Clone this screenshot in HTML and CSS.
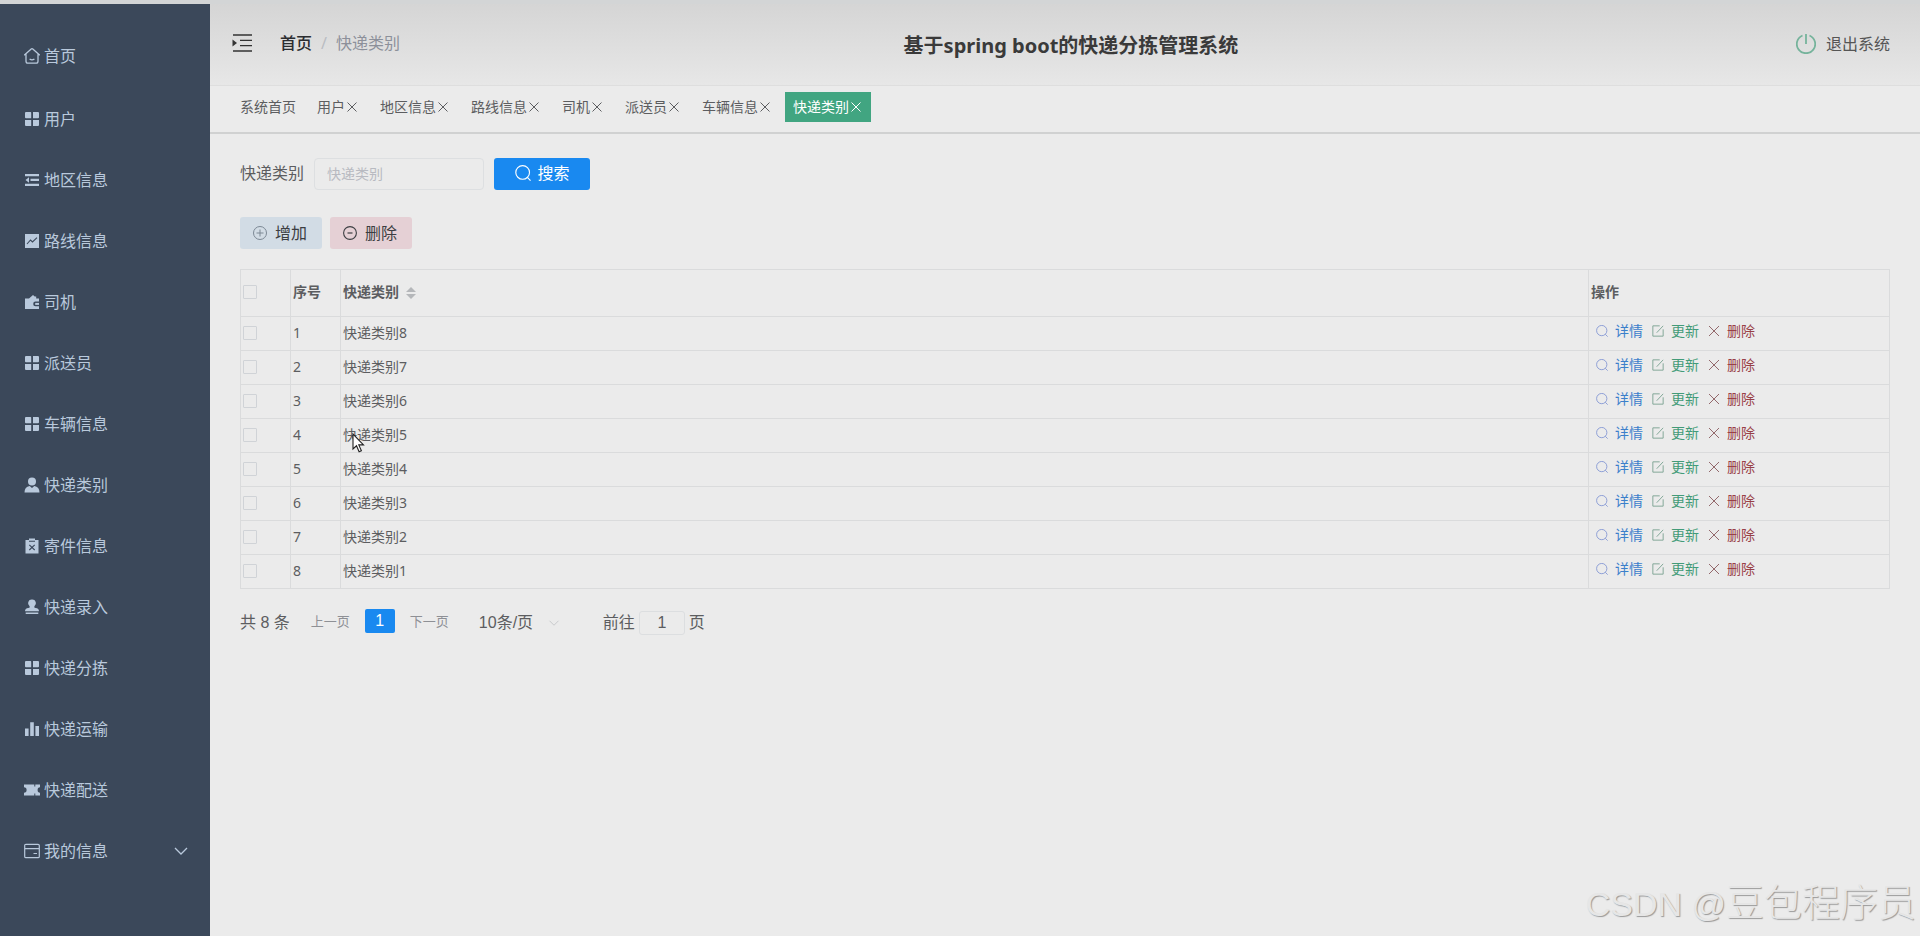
FILE: index.html
```
<!DOCTYPE html>
<html lang="zh-CN">
<head>
    <meta charset="UTF-8">
    <meta name="viewport" content="width=device-width, initial-scale=1.0">
    <title>基于spring boot的快递分拣管理系统</title>
    <link rel="stylesheet" href="styles.css">
</head>
<body>
    <!-- shared icons -->
    <svg class="sprite" aria-hidden="true">
        <symbol id="i-home" viewBox="0 0 16 16"><path d="M2 6.2v7.1q0 1.9 1.9 1.9h8.2q1.9 0 1.9-1.9V6.2M.2 7.2 7.2 1q.8-.6 1.6 0l7 6.2M5.6 10.9q2.4 1.8 4.8 0" fill="none" stroke="currentColor" stroke-width="1.3"/></symbol>
        <symbol id="i-grid" viewBox="0 0 16 16"><path d="M2 1h4.5q.7 0 .7.7v5.5H2q-1 0-1-1V2q0-1 1-1zM9 1h5q1 0 1 1v4.2q0 1-1 1H9zM1 9h6.2v6H2q-1 0-1-1zM9 9h6v5q0 1-1 1H9z" fill="currentColor"/></symbol>
        <symbol id="i-fold" viewBox="0 0 16 16"><path d="M1 2h14v2.3H1zM6.5 6.8H15v2.3H6.5zM1 11.7h14V14H1zM5 5.2v5.5L1.5 7.9z" fill="currentColor"/></symbol>
        <symbol id="i-trend" viewBox="0 0 16 16"><path d="M1 1h14v14H1z" fill="currentColor"/><path d="m3 11 3.5-4 2 2L13 4.7" fill="none" stroke="#3b485a" stroke-width="1.1"/></symbol>
        <symbol id="i-wallet" viewBox="0 0 16 16"><path d="M1 4.4h4L9 1l1.7 1.4h1.5v2H15v3.2h-3.5a2.3 2.3 0 0 0 0 4.6H15V15H1z" fill="currentColor"/><path d="M11.2 8.9H15v2h-3.8z" fill="currentColor"/></symbol>
        <symbol id="i-user" viewBox="0 0 16 16"><circle cx="8" cy="4.6" r="4" fill="currentColor"/><path d="M.5 15.4q0-5.4 5.2-6.4L8 11l2.3-2q5.2 1 5.2 6.4z" fill="currentColor"/></symbol>
        <symbol id="i-clip" viewBox="0 0 16 16"><path d="M1.5 2H5V.5h6V2h3.5v13.5h-13z" fill="currentColor"/><path d="M5 3.2h6M5.3 6.8l5.4 5.2M10.7 6.8 5.3 12" stroke="#3b485a" stroke-width="1.1"/></symbol>
        <symbol id="i-stamp" viewBox="0 0 16 16"><path d="M8 .5a3.7 3.7 0 0 1 2.4 6.7q-.8 1.5 1.2 1.9 3.4.4 3.4 3.2H1q0-2.8 3.4-3.2 2-.4 1.2-1.9A3.7 3.7 0 0 1 8 .5zM1.7 13.5h12.6V15H1.7z" fill="currentColor"/></symbol>
        <symbol id="i-bars" viewBox="0 0 16 16"><path d="M1 7.5h3.6V15H1zM6.2 1.2h3.6V15H6.2zM11.4 5H15v10h-3.6z" fill="currentColor"/></symbol>
        <symbol id="i-ticket" viewBox="0 0 16 16"><path d="M0 2.5h10.3v2h1v-2H16v2.7q-2.4 0-2.4 2.8T16 10.8v2.7h-4.7v-2h-1v2H0v-2.7q2.6 0 2.6-2.8T0 5.2z" fill="currentColor"/></symbol>
        <symbol id="i-card" viewBox="0 0 16 16"><path d="M2 1.3h12q1.3 0 1.3 1.3v10.8q0 1.3-1.3 1.3H2q-1.3 0-1.3-1.3V2.6Q.7 1.3 2 1.3zM.7 5.6h14.6M9.5 10.5H13" fill="none" stroke="currentColor" stroke-width="1.2"/></symbol>
        <symbol id="i-down" viewBox="0 0 16 16"><path d="m2 5 6 6 6-6" fill="none" stroke="currentColor" stroke-width="1.3"/></symbol>
        <symbol id="i-menu" viewBox="0 0 20 18"><path d="M1 1h19M8 6.4h12M8 11.6h12M1 17h19" stroke="currentColor" stroke-width="1.4"/><path d="M.5 5.5 5 9 .5 12.5z" fill="currentColor"/></symbol>
        <symbol id="i-power" viewBox="0 0 20 20"><path d="M6.5 1.5a9.2 9.2 0 1 0 7 0M10 0v10" fill="none" stroke="currentColor" stroke-width="1.8"/></symbol>
        <symbol id="i-close" viewBox="0 0 14 14"><path d="m2.5 2.5 9 9M11.5 2.5l-9 9" stroke="currentColor"/></symbol>
        <symbol id="i-cross" viewBox="0 0 12 12"><path d="m1 1 10 10M11 1 1 11" stroke="currentColor"/></symbol>
        <symbol id="i-search" viewBox="0 0 14 14"><circle cx="6.7" cy="6.5" r="6" fill="none" stroke="currentColor"/><path d="m10.8 10.8 2.8 2.8" stroke="currentColor"/></symbol>
        <symbol id="i-plus" viewBox="0 0 14 14"><path d="M7 3.5v7M3.5 7h7" stroke="currentColor"/><circle cx="7" cy="7" r="6.5" fill="none" stroke="currentColor"/></symbol>
        <symbol id="i-minus" viewBox="0 0 14 14"><path d="M4.5 7h5" stroke="currentColor" stroke-width="1.2"/><circle cx="7" cy="7" r="6.4" fill="none" stroke="currentColor" stroke-width="1.1"/></symbol>
        <symbol id="i-edit" viewBox="0 0 14 14"><path d="M9 1H1v12h12V5M5.5 9 13 1" fill="none" stroke="currentColor" stroke-width="1.1"/></symbol>
    </svg>

    <div class="layout">
        <nav class="sidebar">
            <a class="menu-item home" href="#"><svg><use href="#i-home"/></svg>首页</a>
            <a class="menu-item" href="#"><svg><use href="#i-grid"/></svg>用户</a>
            <a class="menu-item" href="#"><svg><use href="#i-fold"/></svg>地区信息</a>
            <a class="menu-item" href="#"><svg><use href="#i-trend"/></svg>路线信息</a>
            <a class="menu-item" href="#"><svg><use href="#i-wallet"/></svg>司机</a>
            <a class="menu-item" href="#"><svg><use href="#i-grid"/></svg>派送员</a>
            <a class="menu-item" href="#"><svg><use href="#i-grid"/></svg>车辆信息</a>
            <a class="menu-item" href="#"><svg><use href="#i-user"/></svg>快递类别</a>
            <a class="menu-item" href="#"><svg><use href="#i-clip"/></svg>寄件信息</a>
            <a class="menu-item" href="#"><svg><use href="#i-stamp"/></svg>快递录入</a>
            <a class="menu-item" href="#"><svg><use href="#i-grid"/></svg>快递分拣</a>
            <a class="menu-item" href="#"><svg><use href="#i-bars"/></svg>快递运输</a>
            <a class="menu-item" href="#"><svg><use href="#i-ticket"/></svg>快递配送</a>
            <a class="menu-item" href="#"><svg><use href="#i-card"/></svg>我的信息<svg class="arrow"><use href="#i-down"/></svg></a>
        </nav>

        <div class="main">
            <header class="header">
                <div class="crumbs">
                    <button class="fold" aria-label="收起菜单"><svg><use href="#i-menu"/></svg></button>
                    <a class="crumb-home" href="#">首页</a>
                    <span class="slash">/</span>
                    <span class="crumb-now">快递类别</span>
                </div>
                <h1 class="title">基于spring boot的快递分拣管理系统</h1>
                <button class="logout"><svg><use href="#i-power"/></svg>退出系统</button>
            </header>

            <div class="tabs">
                <a class="tab" href="#">系统首页</a>
                <a class="tab" href="#">用户<svg><use href="#i-close"/></svg></a>
                <a class="tab" href="#">地区信息<svg><use href="#i-close"/></svg></a>
                <a class="tab" href="#">路线信息<svg><use href="#i-close"/></svg></a>
                <a class="tab" href="#">司机<svg><use href="#i-close"/></svg></a>
                <a class="tab" href="#">派送员<svg><use href="#i-close"/></svg></a>
                <a class="tab" href="#">车辆信息<svg><use href="#i-close"/></svg></a>
                <a class="tab active" href="#">快递类别<svg><use href="#i-close"/></svg></a>
            </div>

            <main class="content">
                <form class="search">
                    <label for="kind">快递类别</label>
                    <input class="search-input" type="text" id="kind" placeholder="快递类别">
                    <button class="btn primary" type="button"><svg><use href="#i-search"/></svg>搜索</button>
                </form>
                <div class="tools">
                    <button class="btn add"><svg><use href="#i-plus"/></svg>增加</button>
                    <button class="btn del"><svg><use href="#i-minus"/></svg>删除</button>
                </div>

                <table class="table">
                    <colgroup>
                        <col class="col-small"><col class="col-small"><col><col class="col-ops">
                    </colgroup>
                    <thead>
                        <tr>
                            <th><input type="checkbox" aria-label="全选"></th>
                            <th>序号</th>
                            <th>快递类别<span class="sort"></span></th>
                            <th>操作</th>
                        </tr>
                    </thead>
                    <tbody id="rows">
                    </tbody>
                </table>

                <div class="pager">
                    <span class="total">共 8 条</span>
                    <button class="step">上一页</button>
                    <button class="page">1</button>
                    <button class="step">下一页</button>
                    <div class="size">
                        <select aria-label="每页条数"><option>10条/页</option></select>
                        <svg><use href="#i-down"/></svg>
                    </div>
                    <label class="jump">前往<input type="text" value="1">页</label>
                </div>
            </main>
        </div>
    </div>
    <div class="watermark"><span>CSDN @</span>豆包程序员</div>

    <script>
        // newest category first, the pointer rests on the fourth row
        const pointer = '<svg class="pointer" viewBox="0 0 13 20"><path d="M1 1v15l3.5-3.2 2.6 6 2.3-1-2.6-5.9h4.7z" fill="#fff" stroke="#222" stroke-width="1.1"/></svg>';
        let html = "";
        for (let i = 1; i <= 8; i++) {
            html += "<tr><td><input type='checkbox' aria-label='选择第" + i + "行'></td>"
                + "<td>" + i + "</td>"
                + "<td><div class='name'>快递类别" + (9 - i) + (i === 4 ? pointer : "") + "</div></td>"
                + "<td><div class='ops'>"
                + "<button class='op view'><svg><use href='#i-search'/></svg>详情</button>"
                + "<button class='op edit'><svg><use href='#i-edit'/></svg>更新</button>"
                + "<button class='op remove'><svg><use href='#i-cross'/></svg>删除</button>"
                + "</div></td></tr>";
        }
        document.getElementById("rows").innerHTML = html;
    </script>
</body>
</html>
```
FILE: styles.css
```
* {
    box-sizing: border-box;
}

body {
    margin: 0;
    background-color: #ebebeb;
    color: #5c5d60;
    font-family: "Noto Sans", "Noto Sans CJK SC", sans-serif;
    font-size: 16px;
    line-height: 24px;
    overflow: hidden;
}

a {
    color: inherit;
    text-decoration: none;
}

button, input, select {
    font: inherit;
    color: inherit;
    margin: 0;
}

button {
    display: flex;
    align-items: center;
    padding: 0;
    border: none;
    background: none;
}

svg {
    flex: none;
}

.sprite {
    position: absolute;
    width: 0;
    height: 0;
}

.layout {
    display: flex;
    min-height: 100vh;
    border-top: 4px solid #d3d5d6;
}

/* sidebar */
.sidebar {
    flex: none;
    width: 210px;
    padding-top: 21px;
    background-color: #3b485a;
    color: #b9c9dc;
}

.menu-item {
    display: flex;
    align-items: center;
    gap: 4px;
    height: 61px;
    padding: 0 21px 0 24px;
}

.menu-item.home {
    margin-bottom: 2px;
}

.menu-item svg {
    width: 16px;
    height: 16px;
}

.menu-item .arrow {
    margin-left: auto;
}

.main {
    flex: 1;
    min-width: 0;
}

/* header */
.header {
    display: grid;
    grid-template-columns: 1fr auto 1fr;
    align-items: center;
    height: 82px;
    padding: 0 30px 0 22px;
    border-bottom: 1px solid #dedede;
    background: linear-gradient(#d5d5d5, #e7e7e7);
}

.crumbs {
    display: flex;
    align-items: center;
    padding-bottom: 4px;
}

.fold {
    margin-right: 28px;
    color: #333;
}

.fold svg {
    width: 20px;
    height: 18px;
}

.crumb-home {
    color: #2b2d30;
    font-weight: 500;
}

.slash {
    margin: 0 9px;
    color: #b9bcc2;
}

.crumb-now {
    color: #8c909a;
}

.title {
    margin: 0;
    padding: 2px 0 0 20px;
    color: #3a3a3a;
    font-size: 20px;
    line-height: 28px;
}

.logout {
    justify-self: end;
    gap: 10px;
    padding-bottom: 2px;
    color: #555;
}

.logout svg {
    width: 20px;
    height: 20px;
    color: #75b39b;
}

/* opened pages */
.tabs {
    display: flex;
    align-items: center;
    gap: 5px;
    height: 48px;
    padding: 0 22px 4px;
    border-bottom: 2px solid #d0d1d1;
    font-size: 14px;
}

.tab {
    display: flex;
    align-items: center;
    height: 30px;
    padding: 0 8px;
}

.tab svg {
    width: 14px;
    height: 14px;
}

.tab.active {
    background-color: #41a581;
    color: #fff;
}

.content {
    padding: 24px 30px;
}

.search {
    display: flex;
    align-items: center;
    gap: 10px;
}

.search label {
    padding-bottom: 2px;
}

.search-input {
    width: 170px;
    height: 32px;
    padding: 0 12px 2px;
    border: 1px solid #dddfe1;
    border-radius: 4px;
    background: none;
    font-size: 14px;
}

.search-input::placeholder {
    color: #b8bac1;
}

.btn {
    justify-content: center;
    gap: 8px;
    height: 32px;
    padding: 0 15px 0 13px;
    border-radius: 3px;
    color: #3c3e42;
}

.btn svg {
    width: 14px;
    height: 14px;
}

.btn.primary {
    width: 96px;
    gap: 7px;
    padding: 0 0 2px;
    background-color: #1989f0;
    color: #fff;
}

.btn.primary svg {
    width: 16px;
    height: 16px;
}

.tools {
    display: flex;
    gap: 8px;
    margin: 27px 0 20px;
}

.btn.add {
    background-color: #d2dce5;
}

.btn.add svg {
    color: #7c8894;
}

.btn.del {
    background-color: #e5d0d5;
}

/* table */
.table {
    width: 100%;
    table-layout: fixed;
    border-collapse: collapse;
    border: 1px solid #d9dadb;
    font-size: 14px;
    line-height: 20px;
}

.col-small {
    width: 50px;
}

.col-ops {
    width: 301px;
}

.table th,
.table td {
    height: 34px;
    padding: 0 2px 2px;
    border: 1px solid #dadbdc;
    text-align: left;
}

.table th {
    height: 47px;
    font-weight: 600;
}

.table input {
    display: block;
    appearance: none;
    width: 14px;
    height: 14px;
    border: 1px solid #d0d3d7;
    border-radius: 1px;
}

.sort {
    display: inline-flex;
    flex-direction: column;
    gap: 2px;
    margin-left: 7px;
    vertical-align: middle;
}

.sort::before,
.sort::after {
    content: "";
    border: 5px solid transparent;
}

.sort::before {
    border-top: none;
    border-bottom-color: #b5b7ba;
}

.sort::after {
    border-bottom: none;
    border-top-color: #b5b7ba;
}

.name {
    position: relative;
}

.pointer {
    position: absolute;
    left: 9px;
    top: 8px;
    width: 13px;
    height: 20px;
}

.ops {
    display: flex;
    gap: 9px;
    padding: 0 5px 4px;
}

.op {
    gap: 7px;
}

.op svg {
    width: 12px;
    height: 12px;
}

.op.view {
    color: #3b80cb;
}

.op.edit {
    color: #429b78;
}

.op.remove {
    color: #994048;
}

.op.view svg {
    color: #7f93d2;
}

.op.edit svg {
    color: #7da594;
}

.op.remove svg {
    color: #93696c;
}

/* pagination */
.pager {
    display: flex;
    align-items: center;
    margin-top: 18px;
    font-family: "Liberation Sans", "Noto Sans CJK SC", sans-serif;
}

.total {
    padding-top: 4px;
    margin-right: 21px;
}

.step {
    padding-top: 2px;
    color: #8e9095;
    font-size: 13px;
}

.page {
    justify-content: center;
    width: 30px;
    height: 24px;
    margin: 0 15px;
    border-radius: 2px;
    background-color: #1989f0;
    color: #fff;
}

.size {
    display: flex;
    align-items: center;
    gap: 14px;
    padding-top: 4px;
    margin: 0 43px 0 30px;
}

.size select {
    appearance: none;
    padding: 0;
    border: none;
    background: none;
}

.size svg {
    width: 12px;
    height: 12px;
    color: #c6c8cb;
}

.jump {
    display: flex;
    align-items: center;
    gap: 4px;
    padding-top: 4px;
}

.jump input {
    width: 46px;
    height: 24px;
    padding: 0;
    border: 1px solid #dcdee0;
    border-radius: 3px;
    background: none;
    text-align: center;
}

.watermark {
    position: absolute;
    right: 4px;
    bottom: 4px;
    color: #e6e6e6;
    font-family: "Liberation Sans", "Noto Sans CJK SC", sans-serif;
    font-size: 38px;
    font-weight: 300;
    line-height: 56px;
    text-shadow: 1px 1px 1px #999;
}

.watermark span {
    font-size: 34px;
}
```
